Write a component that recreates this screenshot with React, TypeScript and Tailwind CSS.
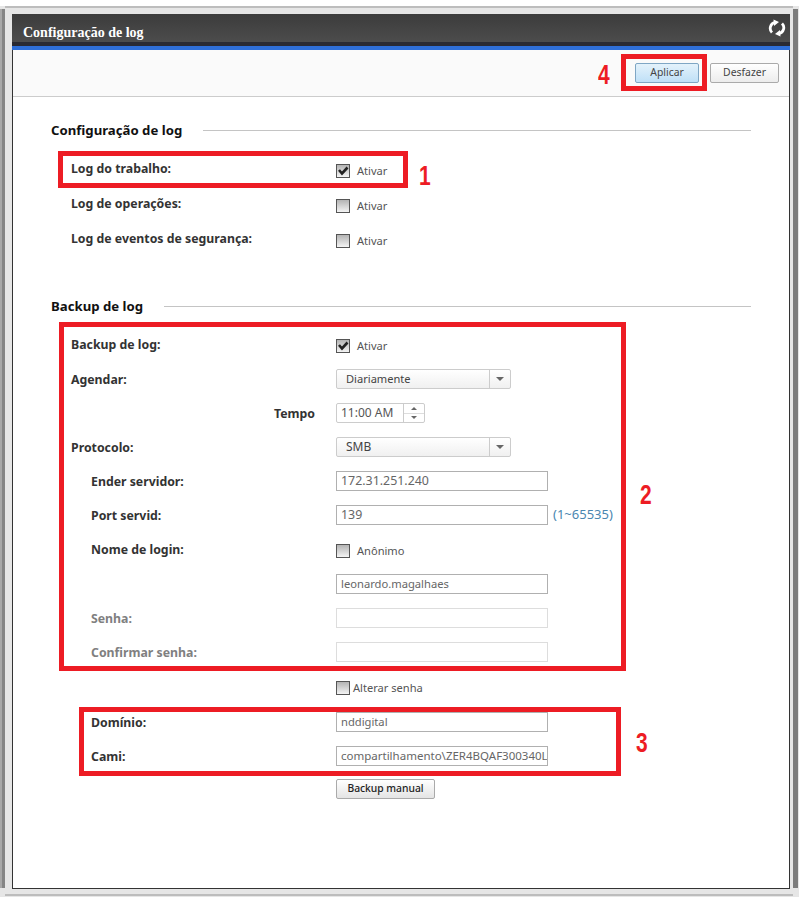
import { ReactNode } from "react";

const sans = "font-['Noto_Sans','Open_Sans',sans-serif]";

function Checkbox({ checked = false }: { checked?: boolean }) {
  return (
    <span className="flex h-[14px] w-[14px] items-center justify-center border border-[#555] bg-gradient-to-b from-[#b4b4b4] to-[#f4f4f4]">
      {checked && (
        <svg width="12" height="12" viewBox="0 0 12 12">
          <path d="M2 5 L5 8.5 L10.5 2.5" fill="none" stroke="#222" strokeWidth="2.6" />
        </svg>
      )}
    </span>
  );
}

function CheckLabel({
  checked,
  text,
  gap = "gap-[7px]",
  drop = "pt-[4px]",
}: {
  checked?: boolean;
  text: string;
  gap?: string;
  drop?: string;
}) {
  return (
    <div className={`flex items-center ${drop} ${gap}`}>
      <Checkbox checked={checked} />
      <span className="text-[11.1px] text-[#555]">{text}</span>
    </div>
  );
}

function Select({ value, size = "text-[11.1px]" }: { value: string; size?: string }) {
  return (
    <div className="flex h-[20px] w-[175px] rounded-[2px] border border-[#ccc] bg-gradient-to-b from-white to-[#f0f0f0]">
      <span className={`flex-1 pl-[9px] leading-[18px] text-[#444] ${size}`}>{value}</span>
      <span className="flex w-[21px] items-center justify-center border-l border-[#ccc]">
        <span className="h-0 w-0 border-x-[4px] border-t-[4px] border-x-transparent border-t-[#666]" />
      </span>
    </div>
  );
}

function TextBox({ value = "", disabled = false, size = "text-[11.2px]" }: { value?: string; disabled?: boolean; size?: string }) {
  return (
    <div
      className={`h-[20px] w-[212px] overflow-hidden whitespace-nowrap border px-[4px] leading-[18px] text-[#666] ${size} ${
        disabled ? "border-[#ddd]" : "border-[#b0b0b0]"
      }`}
    >
      {value}
    </div>
  );
}

function Row({
  label,
  children,
  indent = false,
  muted = false,
  right = false,
  h = "h-[34px]",
  className = "",
}: {
  label?: string;
  children: ReactNode;
  indent?: boolean;
  muted?: boolean;
  right?: boolean;
  h?: string;
  className?: string;
}) {
  return (
    <div className={`flex ${h} items-center pl-[58px] ${className}`}>
      <div
        className={`w-[265px] shrink-0 pt-[2px] text-[12.3px] font-bold ${indent ? "pl-[20px]" : ""} ${right ? "pr-[21px] text-right" : ""} ${
          muted ? "text-[#808080]" : "text-[#333]"
        }`}
      >
        {label}
      </div>
      <div className="flex items-center gap-[5px]">{children}</div>
    </div>
  );
}

function SectionTitle({ title }: { title: string }) {
  return (
    <div className="flex items-center gap-[21px] pl-[38px] pr-[38px]">
      <span className="text-[13.2px] font-bold leading-[18px] text-[#111]">{title}</span>
      <span className="h-px flex-1 bg-[#c4c4c4]" />
    </div>
  );
}

function RedBox({ className }: { className: string }) {
  return <div className={`absolute border-[5px] border-[#ed1c24] ${className}`} />;
}

function Num({ n, className }: { n: string; className: string }) {
  return (
    <span className={`absolute origin-left scale-x-75 font-['Liberation_Sans',sans-serif] text-[28px] font-bold leading-none text-[#ed1c24] ${className}`}>
      {n}
    </span>
  );
}

export default function App() {
  return (
    <div className={`relative flex h-[897px] w-[799px] overflow-hidden border-b border-t-[6px] border-b-[#e6e6e6] border-t-white bg-[#e6e6e6] ${sans}`}>
      {/* gray edges of the page behind the dialog */}
      <div className="mb-[8px] mt-[3px] w-[5px] border-l-2 border-[#a8a8a8] bg-[#858585]" />
      <div className="flex flex-1 flex-col border-y-2 border-[#bdbdbd] pb-[5px] pl-[7px] pr-[3px] pt-[6px]">
        <div className="flex flex-1 flex-col border border-t-0 border-[#333] bg-white">
          <div className="mx-[-1px] flex h-[32px] items-center justify-between border-b-[4px] border-[#2a2a32] bg-gradient-to-b from-[#3c3c3c] to-[#4c4c4c] pl-[11px] pr-[4px]">
            <span className="pt-[8px] font-['Liberation_Serif',serif] text-[14px] font-bold text-white">Configuração de log</span>
            <svg width="18" height="18" viewBox="0 0 18 18">
              <path d="M4 13.5 A6 6 0 0 1 7 3.4 M14 4.5 A6 6 0 0 1 11 14.6" fill="none" stroke="#fff" strokeWidth="2.8" />
              <path d="M5.5 0.5 L11 3 L6 7 Z M12.5 17.5 L7 15 L12 11 Z" fill="#fff" />
            </svg>
          </div>
          <div className="mx-[-1px] h-[4px] bg-[#2f6fd8]" />
          <div className="flex h-[47px] items-center justify-end gap-[11px] border-b border-[#ccc] bg-[#fafafa] pr-[10px]">
            <button className="h-[20px] w-[64px] rounded-[2px] border border-[#7fa6c4] bg-gradient-to-b from-[#e4f2fb] to-[#bfe0f7] text-[10.4px] text-[#444]">
              Aplicar
            </button>
            <button className="h-[20px] w-[69px] rounded-[2px] border border-[#aaa] bg-gradient-to-b from-white to-[#ececec] text-[10.4px] text-[#444]">
              Desfazer
            </button>
          </div>

          <div className="pt-[24px]">
            <SectionTitle title="Configuração de log" />
            <div className="pt-[12px]">
              <Row label="Log do trabalho:" h="h-[35px]">
                <CheckLabel checked text="Ativar" drop="pt-[6px]" />
              </Row>
              <Row label="Log de operações:" h="h-[35px]">
                <CheckLabel text="Ativar" drop="pt-[6px]" />
              </Row>
              <Row label="Log de eventos de segurança:" h="h-[35px]">
                <CheckLabel text="Ativar" drop="pt-[6px]" />
              </Row>
            </div>
          </div>

          <div className="pt-[41px]">
            <SectionTitle title="Backup de log" />
            <div className="pt-[11px]">
              <Row label="Backup de log:" h="h-[36px]">
                <CheckLabel checked text="Ativar" />
              </Row>
              <Row label="Agendar:">
                <Select value="Diariamente" />
              </Row>
              <Row label="Tempo" right>
                <div className="flex h-[20px] w-[89px] rounded-[2px] border border-[#ccc]">
                  <span className="flex-1 pl-[4px] text-[12px] leading-[18px] text-[#555]">11:00 AM</span>
                  <span className="flex w-[21px] flex-col border-l border-[#ccc]">
                    <span className="flex flex-1 items-center justify-center border-b border-[#ddd]">
                      <span className="h-0 w-0 border-x-[3px] border-b-[3px] border-x-transparent border-b-[#666]" />
                    </span>
                    <span className="flex flex-1 items-center justify-center">
                      <span className="h-0 w-0 border-x-[3px] border-t-[3px] border-x-transparent border-t-[#666]" />
                    </span>
                  </span>
                </div>
              </Row>
              <Row label="Protocolo:">
                <Select value="SMB" size="text-[12px]" />
              </Row>
              <Row label="Ender servidor:" indent>
                <TextBox value="172.31.251.240" size="text-[12.4px]" />
              </Row>
              <Row label="Port servid:" indent>
                <TextBox value="139" size="text-[12.4px]" />
                <span className="text-[13px] text-[#4a86b0]">(1~65535)</span>
              </Row>
              <Row label="Nome de login:" indent>
                <CheckLabel text="Anônimo" />
              </Row>
              <Row label="" indent className="mt-[1px]">
                <TextBox value="leonardo.magalhaes" />
              </Row>
              <Row label="Senha:" indent muted>
                <TextBox disabled />
              </Row>
              <Row label="Confirmar senha:" indent muted>
                <TextBox disabled />
              </Row>
              <Row>
                <CheckLabel text="Alterar senha" gap="gap-[3px]" />
              </Row>
              <Row label="Domínio:" indent className="mt-[2px]">
                <TextBox value="nddigital" />
              </Row>
              <Row label="Cami:" indent>
                <TextBox value="compartilhamento\ZER4BQAF300340L" size="text-[11.5px]" />
              </Row>
              <Row h="h-[32px]">
                <button className="h-[20px] w-[99px] rounded-[2px] border border-[#aaa] bg-gradient-to-b from-white to-[#e4e4e4] text-[10.3px] font-medium text-[#222]">
                  Backup manual
                </button>
              </Row>
            </div>
          </div>
        </div>
      </div>
      <div className="mb-[8px] mr-[1px] mt-[3px] w-[5px] bg-[#7c7c7c]" />

      {/* annotations */}
      <RedBox className="left-[58px] top-[145px] h-[37px] w-[350px]" />
      <RedBox className="left-[59px] top-[316px] h-[349px] w-[567px]" />
      <RedBox className="left-[79px] top-[701px] h-[69px] w-[542px]" />
      <RedBox className="left-[621px] top-[48px] h-[37px] w-[86px]" />
      <Num n="1" className="left-[419px] top-[156px]" />
      <Num n="2" className="left-[640px] top-[475px]" />
      <Num n="3" className="left-[636px] top-[723px]" />
      <Num n="4" className="left-[598px] top-[55px]" />
    </div>
  );
}
